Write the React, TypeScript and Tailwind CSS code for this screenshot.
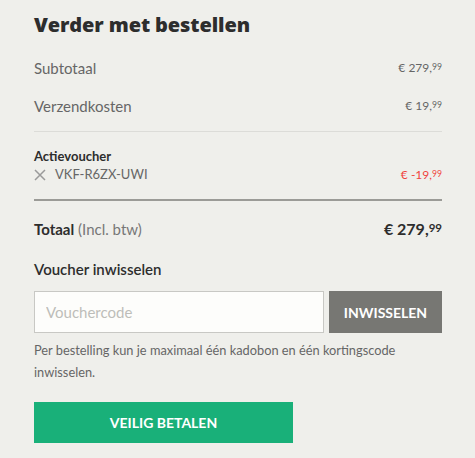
function Price({ whole, cents, className }: { whole: string; cents: string; className?: string }) {
  return (
    <span className={`leading-none ${className ?? ''}`}>
      {whole}
      <span className="relative top-[-0.25em] text-[0.72em] leading-none">{cents}</span>
    </span>
  );
}

export default function App() {
  return (
    <div className="min-h-[458px] bg-[#efefeb] font-['Lato',sans-serif] text-[#2d2d2d]">
      <div className="ml-[34px] w-[408px] pt-[12px]">
        <h1 className="font-['Open_Sans',sans-serif] text-[20px] font-extrabold leading-[26px] tracking-[-0.1px]">
          Verder met bestellen
        </h1>

        <div className="mt-[20px] flex h-[20px] items-center justify-between text-[15px] text-[#666]">
          <span>Subtotaal</span>
          <Price whole="€ 279," cents="99" className="text-[12px]" />
        </div>
        <div className="mt-[18px] flex h-[20px] items-center justify-between text-[15px] text-[#666]">
          <span>Verzendkosten</span>
          <Price whole="€ 19," cents="99" className="text-[12px]" />
        </div>

        <div className="mt-[15px] h-px bg-[#dcdcd8]" />

        <div className="mt-[16px] h-[16px] text-[13px] font-bold leading-[16px]">Actievoucher</div>
        <div className="mt-[3px] flex h-[16px] items-center justify-between text-[13px]">
          <span className="flex items-center gap-[9px] text-[#666]">
            <svg width="12" height="12" viewBox="0 0 12 12" className="text-[#9a9a9a]">
              <path d="M1 1 L11 11 M11 1 L1 11" stroke="currentColor" strokeWidth="1.5" fill="none" />
            </svg>
            VKF-R6ZX-UWI
          </span>
          <Price whole="€ -19," cents="99" className="text-[12px] text-[#f0443f]" />
        </div>

        <div className="mt-[16px] h-[2px] bg-[#9b9b97]" />

        <div className="mt-[18px] flex h-[20px] items-center justify-between">
          <span className="text-[15px]">
            <span className="font-bold">Totaal</span> <span className="text-[#777]">(Incl. btw)</span>
          </span>
          <Price whole="€ 279," cents="99" className="text-[16px] font-bold" />
        </div>

        <div className="mt-[20px] h-[20px] text-[15px] font-semibold leading-[20px]">Voucher inwisselen</div>

        <div className="mt-[12px] flex gap-[5px]">
          <input
            placeholder="Vouchercode"
            className="h-[42px] w-[290px] border border-[#c8c8c4] bg-[#fdfdfb] px-[11px] text-[15px] placeholder:text-[#bdbdb9] outline-none"
          />
          <button className="h-[42px] flex-1 bg-[#777773] text-[14px] font-bold text-white">INWISSELEN</button>
        </div>

        <p className="mt-[6px] text-[12.8px] leading-[22px] text-[#666]">
          Per bestelling kun je maximaal één kadobon en één kortingscode inwisselen.
        </p>

        <button className="mt-[19px] h-[41px] w-[259px] bg-[#19b079] text-[14px] font-bold text-white">
          VEILIG BETALEN
        </button>
      </div>
    </div>
  );
}
